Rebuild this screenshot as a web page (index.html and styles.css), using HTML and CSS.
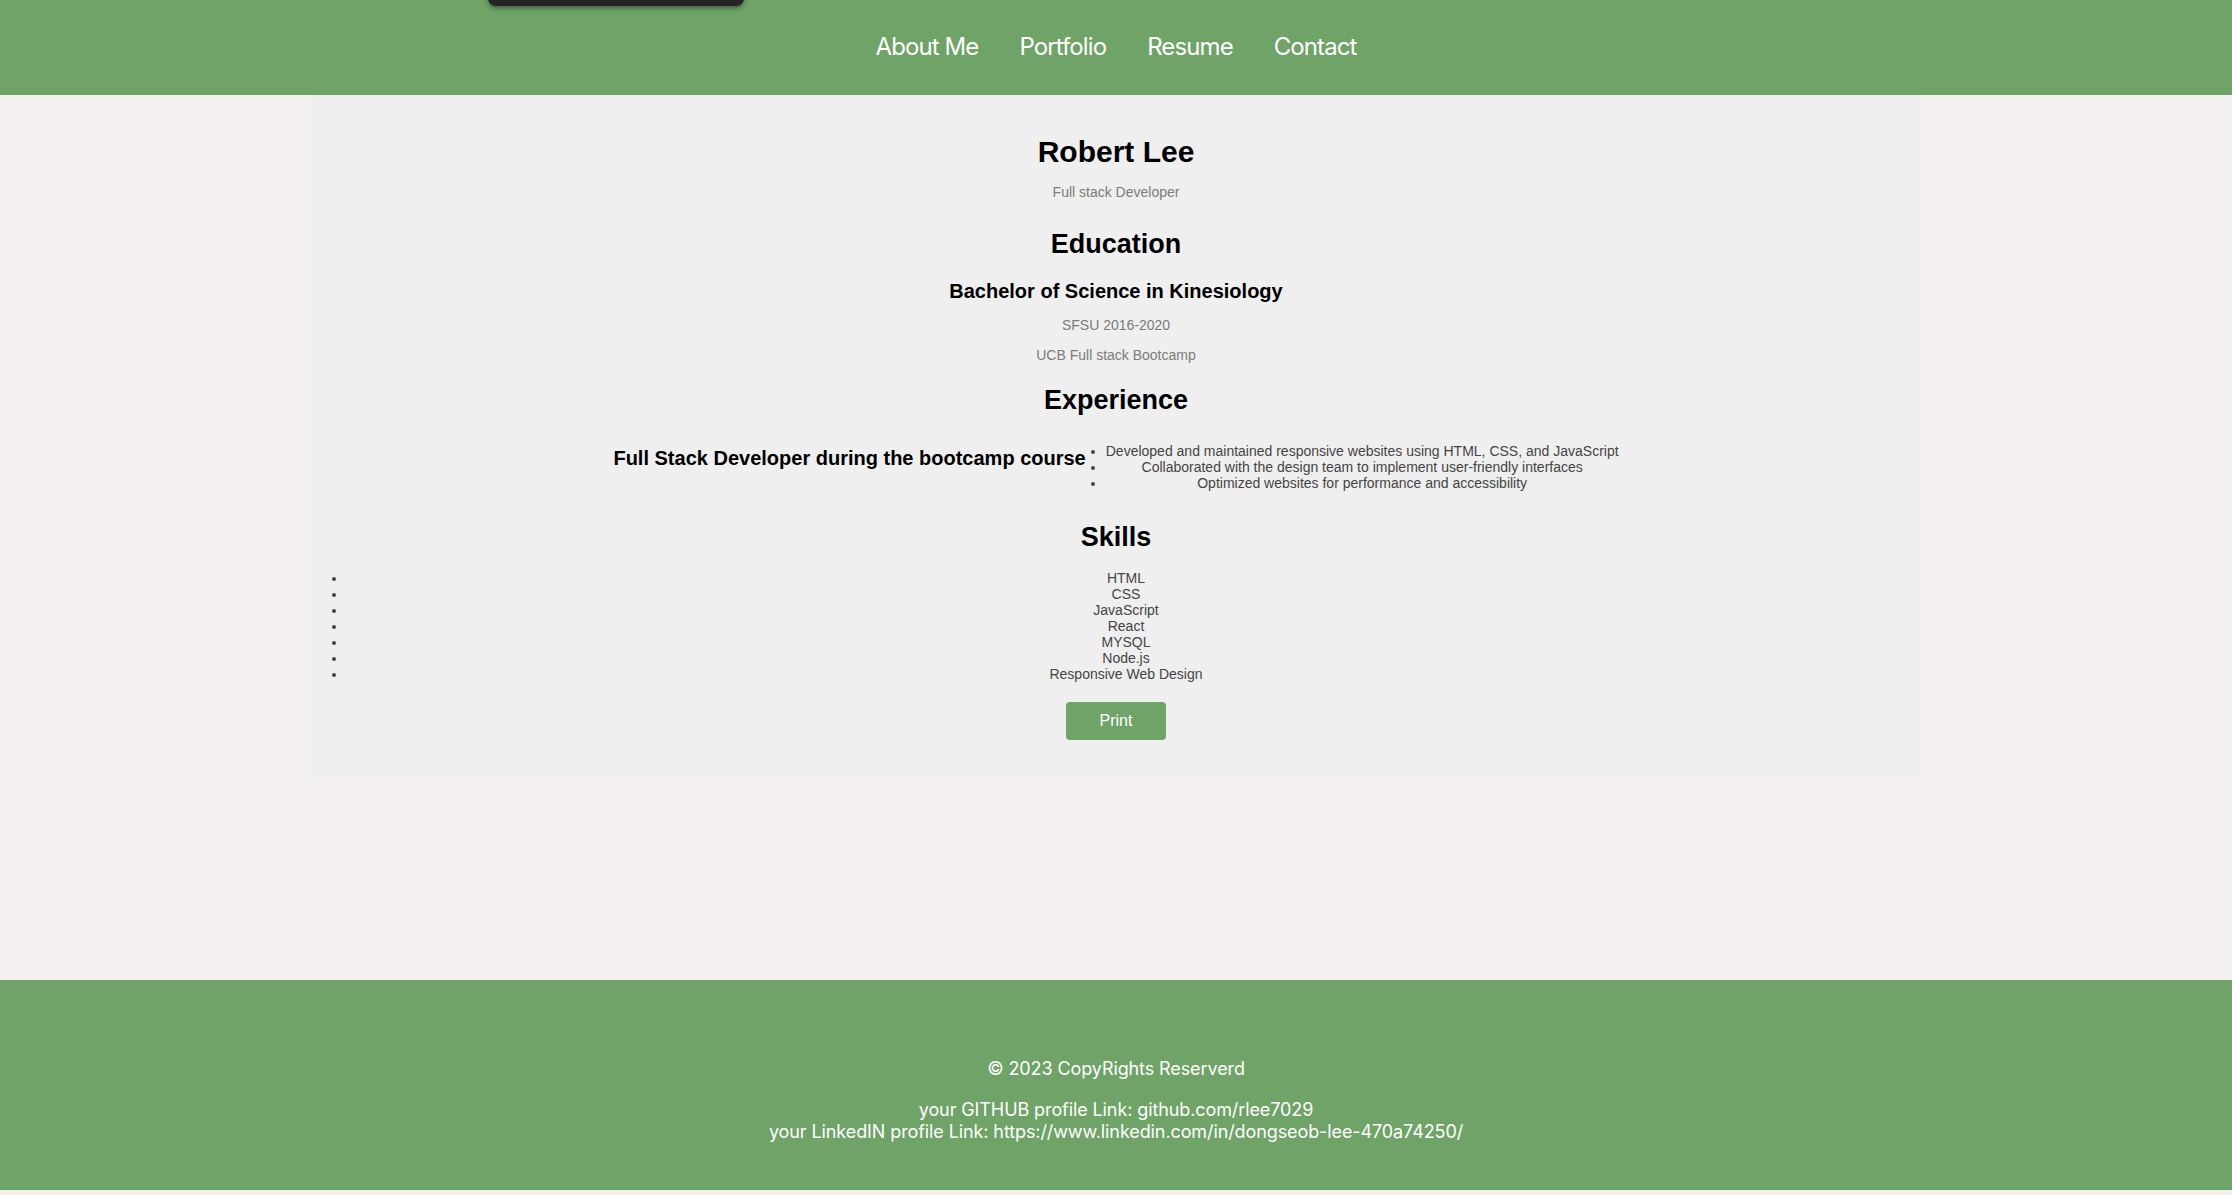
FILE: index.html
```html
<!DOCTYPE html>
<html lang="en">
<head>
<meta charset="utf-8">
<title>Robert Lee - Resume</title>
<link rel="stylesheet" href="styles.css">
</head>
<body>
<header class="site-header">
  <div class="logo-tab"></div>
  <nav class="nav">
    <a href="#" class="nav-link">About Me</a>
    <a href="#" class="nav-link">Portfolio</a>
    <a href="#" class="nav-link">Resume</a>
    <a href="#" class="nav-link">Contact</a>
  </nav>
</header>
<main class="page">
  <section class="resume">
    <h1 class="name">Robert Lee</h1>
    <p class="sub">Full stack Developer</p>
    <h2 class="section-title edu-title">Education</h2>
    <h3 class="degree">Bachelor of Science in Kinesiology</h3>
    <p class="sub school">SFSU 2016-2020</p>
    <p class="sub school">UCB Full stack Bootcamp</p>
    <h2 class="section-title exp-title">Experience</h2>
    <div class="exp-row">
      <h3 class="job">Full Stack Developer during the bootcamp course</h3>
      <ul class="duties">
        <li>Developed and maintained responsive websites using HTML, CSS, and JavaScript</li>
        <li>Collaborated with the design team to implement user-friendly interfaces</li>
        <li>Optimized websites for performance and accessibility</li>
      </ul>
    </div>
    <h2 class="section-title skills-title">Skills</h2>
    <ul class="skills">
      <li>HTML</li>
      <li>CSS</li>
      <li>JavaScript</li>
      <li>React</li>
      <li>MYSQL</li>
      <li>Node.js</li>
      <li>Responsive Web Design</li>
    </ul>
    <div class="actions"><button class="print-btn">Print</button></div>
  </section>
</main>
<footer class="site-footer">
  <p class="copy">© 2023 CopyRights Reserverd</p>
  <p class="links">your GITHUB profile Link: github.com/rlee7029<br>your LinkedIN profile Link: https://www.linkedin.com/in/dongseob-lee-470a74250/</p>
</footer>
</body>
</html>
```
FILE: styles.css
```css
* { box-sizing: border-box; }
html, body { margin: 0; padding: 0; }
body {
  background: #f4f0ef;
  font-family: "Liberation Sans", Arial, sans-serif;
  color: #000;
}
.site-header {
  position: relative;
  height: 95px;
  background: #6fa368;
  display: flex;
  align-items: center;
  justify-content: center;
}
.logo-tab {
  position: absolute;
  left: 488px;
  top: -40px;
  width: 256px;
  height: 46px;
  background: #232326;
  border-radius: 8px;
  box-shadow: 0 2px 5px rgba(0,0,0,0.45);
}
.nav {
  display: flex;
  gap: 41px;
  margin-top: -2px;
}
.nav-link {
  font-family: Inter, "Noto Sans", sans-serif;
  font-size: 24px;
  letter-spacing: -0.9px;
  color: #fff;
  text-decoration: none;
  line-height: 30px;
}
.page {
  padding-bottom: 200px;
}
.resume {
  width: 1608px;
  margin: 0 auto;
  background: #efefef;
  padding: 20px 15px 40px;
  text-align: center;
}
.name {
  font-size: 30px;
  line-height: 36px;
  margin: 19px 0 0;
}
.sub {
  font-size: 14px;
  line-height: 16px;
  color: #7b7b7b;
  margin: 14px 0 0;
}
.section-title {
  font-size: 27px;
  line-height: 32px;
  margin: 0;
}
.edu-title { margin-top: 28px; }
.degree {
  font-size: 20px;
  line-height: 24px;
  margin: 19px 0 0;
}
.exp-title { margin-top: 21px; }
.exp-row {
  display: flex;
  justify-content: center;
  align-items: flex-start;
  margin-top: 27px;
}
.job {
  font-size: 20px;
  line-height: 24px;
  margin: 3px 0 0;
}
.duties {
  margin: 0;
  padding: 0 0 0 20px;
  font-size: 14px;
  line-height: 16px;
  color: #444;
}
.skills-title { margin-top: 30px; }
.skills {
  margin: 17px 0 0;
  padding: 0 0 0 20px;
  font-size: 14px;
  line-height: 16px;
  color: #444;
}
.actions {
  margin-top: 20px;
}
.print-btn {
  width: 100px;
  height: 38px;
  background: #6fa368;
  color: #fff;
  border: none;
  border-radius: 4px;
  font-family: "Liberation Sans", Arial, sans-serif;
  font-size: 16px;
  padding: 0;
  cursor: pointer;
}
.site-footer {
  background: #6fa368;
  height: 210px;
  margin-bottom: 5px;
  padding-top: 78px;
  text-align: center;
  color: #fff;
  font-family: Inter, "Noto Sans", sans-serif;
  font-size: 18px;
  letter-spacing: -0.1px;
  line-height: 22px;
}
.copy { margin: 0; }
.links { margin: 19px 0 0; }
```
